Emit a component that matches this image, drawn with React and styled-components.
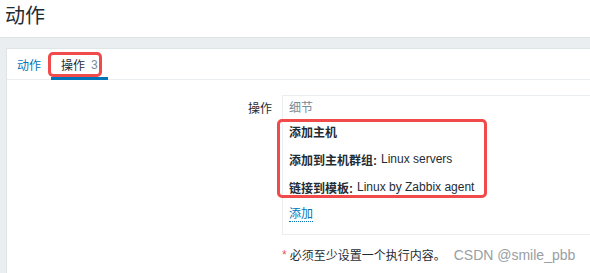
import React from "react";
import styled, { createGlobalStyle } from "styled-components";

const Global = createGlobalStyle`
  html, body { margin: 0; padding: 0; background: #ebeef0; }
  body { font-family: Arial, "Liberation Sans", "Noto Sans CJK SC", sans-serif; font-size: 12px; color: #1f2c33; overflow: hidden; }
`;

const Page = styled.div`
  width: 590px;
  height: 273px;
  position: relative;
  overflow: hidden;
  background: #ebeef0;
`;

const Header = styled.div`
  height: 38px;
  background: #fff;
  display: flex;
  align-items: center;
  padding-left: 5px;
  border-bottom: 1px solid #dfe4e7;
  box-sizing: border-box;
`;

const Title = styled.h1`
  margin: 0;
  font-size: 20px;
  font-weight: normal;
  color: #1f2c33;
  line-height: 24px;
  margin-top: -6px;
`;

const Body = styled.div`
  padding: 10px 0 0 6px;
`;

const Panel = styled.div`
  background: #fff;
  border: 1px solid #dfe4e7;
  border-right: none;
  height: 240px;
  position: relative;
`;

const Tabs = styled.div`
  display: flex;
  height: 30px;
  border-bottom: 1px solid #ebeef0;
  padding-left: 10px;
  gap: 20px;
`;

const Tab = styled.div`
  display: flex;
  align-items: center;
  padding: 0 ${(p) => (p.$active ? "10px" : "0")};
  margin-left: ${(p) => (p.$active ? "-10px" : "0")};
  color: ${(p) => (p.$active ? "#1f2c33" : "#0275b8")};
  border-bottom: 3px solid ${(p) => (p.$active ? "#0275b8" : "transparent")};
  margin-bottom: -1px;
  padding-top: 3px;
  box-sizing: border-box;
`;

const Count = styled.span`
  color: #768d99;
  margin-left: 6px;
`;

const Form = styled.div`
  display: grid;
  grid-template-columns: 265px 1fr;
  column-gap: 10px;
  padding-top: 15px;
`;

const Label = styled.div`
  text-align: right;
  padding-top: 4px;
`;

const Table = styled.div`
  border: 1px solid #ebeef0;
  border-right: none;
  padding: 0 6px;
  height: 138px;
`;

const HeadCell = styled.div`
  color: #768d99;
  height: 21px;
  display: flex;
  align-items: center;
`;

const Row = styled.div`
  height: 28px;
  display: flex;
  align-items: center;
  white-space: nowrap;
  &:first-of-type { height: 22px; }
`;

const Strong = styled.b`
  font-weight: bold;
  margin-right: 4px;
`;

const AddLink = styled.span`
  display: inline-block;
  margin-top: 6px;
  color: #0275b8;
  border-bottom: 1px dotted #0275b8;
  line-height: 14px;
`;

const Note = styled.div`
  grid-column: 2;
  margin-top: 11px;
  display: flex;
  align-items: center;
  white-space: nowrap;
`;

const Star = styled.span`
  color: #e45959;
  margin-right: 3px;
`;

const Watermark = styled.span`
  color: #999ea3;
  font-size: 14px;
  margin-left: 8px;
  margin-top: 1px;
`;

const Mark = styled.div`
  position: absolute;
  border: 3px solid #f04a4a;
  border-radius: 5px;
  pointer-events: none;
`;

export default function App() {
  return (
    <Page>
      <Global />
      <Header>
        <Title>动作</Title>
      </Header>
      <Body>
        <Panel>
          <Tabs>
            <Tab>动作</Tab>
            <Tab $active>
              操作<Count>3</Count>
            </Tab>
          </Tabs>
          <Form>
            <Label>操作</Label>
            <Table>
              <HeadCell>细节</HeadCell>
              <Row><Strong>添加主机</Strong></Row>
              <Row><Strong>添加到主机群组:</Strong>Linux servers</Row>
              <Row><Strong>链接到模板:</Strong>Linux by Zabbix agent</Row>
              <AddLink>添加</AddLink>
            </Table>
            <Note>
              <Star>*</Star>必须至少设置一个执行内容。
              <Watermark>CSDN @smile_pbb</Watermark>
            </Note>
          </Form>
        </Panel>
      </Body>
      <Mark style={{ left: 48, top: 52, width: 48, height: 19 }} />
      <Mark style={{ left: 277, top: 119, width: 204, height: 73 }} />
    </Page>
  );
}
